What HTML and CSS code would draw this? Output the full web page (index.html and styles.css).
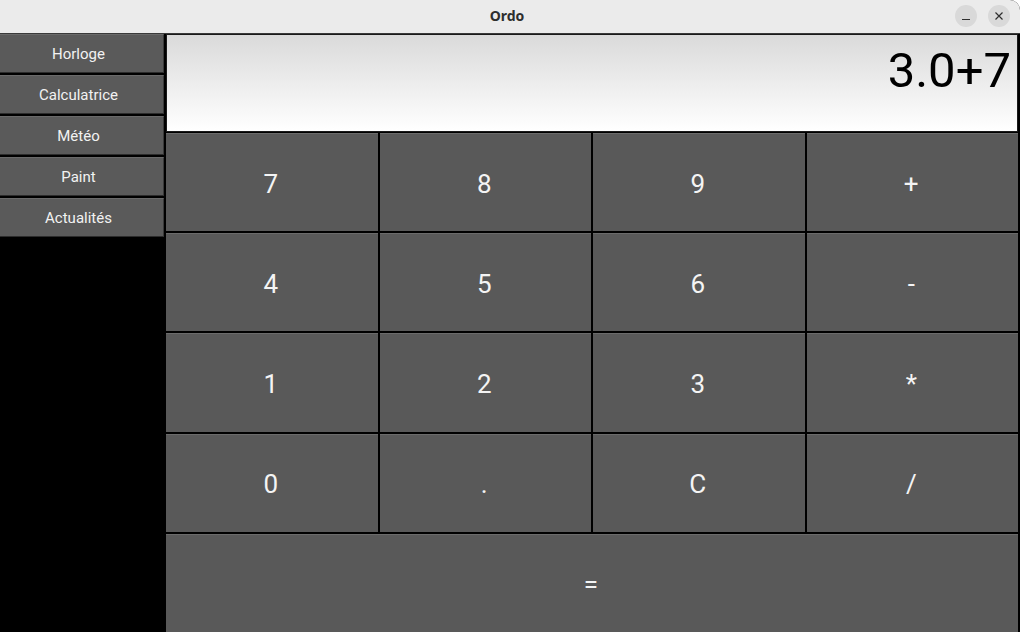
FILE: index.html
```html
<!DOCTYPE html>
<html lang="fr">
<head>
<meta charset="utf-8">
<title>Ordo</title>
<link rel="stylesheet" href="styles.css">
</head>
<body>
<div class="window">
  <header class="titlebar">
    <span class="title">Ordo</span>
    <div class="controls">
      <span class="ctl"><svg width="10" height="10" viewBox="0 0 10 10"><path d="M1 8.5h8" stroke="#2e2e2e" stroke-width="1.2"/></svg></span>
      <span class="ctl"><svg width="10" height="10" viewBox="0 0 10 10"><path d="M1.5 1.5l7 7M8.5 1.5l-7 7" stroke="#2e2e2e" stroke-width="1.2"/></svg></span>
    </div>
  </header>
  <div class="content">
    <nav class="sidebar">
      <button class="nav">Horloge</button>
      <button class="nav">Calculatrice</button>
      <button class="nav">Météo</button>
      <button class="nav">Paint</button>
      <button class="nav">Actualités</button>
    </nav>
    <main class="calc">
      <div class="display">3.0+7</div>
      <div class="keys">
        <button class="key">7</button>
        <button class="key">8</button>
        <button class="key">9</button>
        <button class="key">+</button>
        <button class="key">4</button>
        <button class="key">5</button>
        <button class="key">6</button>
        <button class="key">-</button>
        <button class="key">1</button>
        <button class="key">2</button>
        <button class="key">3</button>
        <button class="key">*</button>
        <button class="key">0</button>
        <button class="key">.</button>
        <button class="key">C</button>
        <button class="key">/</button>
        <button class="key wide">=</button>
      </div>
    </main>
  </div>
</div>
</body>
</html>
```
FILE: styles.css
```css
* { box-sizing: border-box; }
html, body {
  margin: 0;
  padding: 0;
  width: 1020px;
  height: 632px;
  overflow: hidden;
  background: #ffffff;
  font-family: Roboto, "Liberation Sans", sans-serif;
}
.window {
  width: 1020px;
  height: 632px;
  display: flex;
  flex-direction: column;
  background: #000;
  border-radius: 0 10px 0 0;
  overflow: hidden;
}
.titlebar {
  height: 34px;
  flex: none;
  background: #ebebeb;
  border-bottom: 1px solid #3a3a3a;
  display: flex;
  align-items: center;
  justify-content: center;
  position: relative;
}
.title {
  font-family: "Noto Sans", "Open Sans", sans-serif;
  font-weight: 700;
  font-size: 14px;
  color: #2e2e2e;
  margin-left: -6px;
  margin-top: -2px;
}
.controls {
  position: absolute;
  right: 10px;
  top: 5px;
  display: flex;
  gap: 11px;
}
.ctl {
  width: 22px;
  height: 22px;
  border-radius: 50%;
  background: #d9d9d9;
  display: flex;
  align-items: center;
  justify-content: center;
}
.content {
  flex: 1;
  display: flex;
  background: #000;
}
.sidebar {
  width: 165px;
  flex: none;
  display: flex;
  flex-direction: column;
  gap: 2px;
  padding-right: 1px;
}
.nav {
  height: 39px;
  margin: 0;
  background: #5a5a5a;
  border: none;
  border-top: 1px solid #6a6a6a;
  border-bottom: 1px solid #2c2c2c;
  border-right: 1px solid #3a3a3a;
  color: #f2f2f2;
  font-family: Roboto, "Liberation Sans", sans-serif;
  font-size: 15px;
  padding: 0 6px 0 0;
}
.calc {
  flex: 1;
  display: flex;
  flex-direction: column;
  padding-left: 1px;
  padding-right: 2px;
}
.display {
  height: 98px;
  margin-bottom: 1px;
  background: linear-gradient(#dadada, #ffffff);
  border: 1px solid #1a1a1a;
  color: #000;
  font-size: 49px;
  text-align: right;
  padding: 6px 6px 0 0;
  line-height: 60px;
}
.keys {
  flex: 1;
  display: grid;
  grid-template-columns: repeat(4, 1fr);
  grid-template-rows: repeat(5, 1fr);
  gap: 2px;
}
.key {
  margin: 0;
  background: #595959;
  border: none;
  border-top: 1px solid #6b6b6b;
  color: #f4f4f4;
  font-family: Roboto, "Liberation Sans", sans-serif;
  font-size: 26px;
  padding: 2px 2px 0 0;
}
.key.wide {
  grid-column: 1 / span 4;
}
```
